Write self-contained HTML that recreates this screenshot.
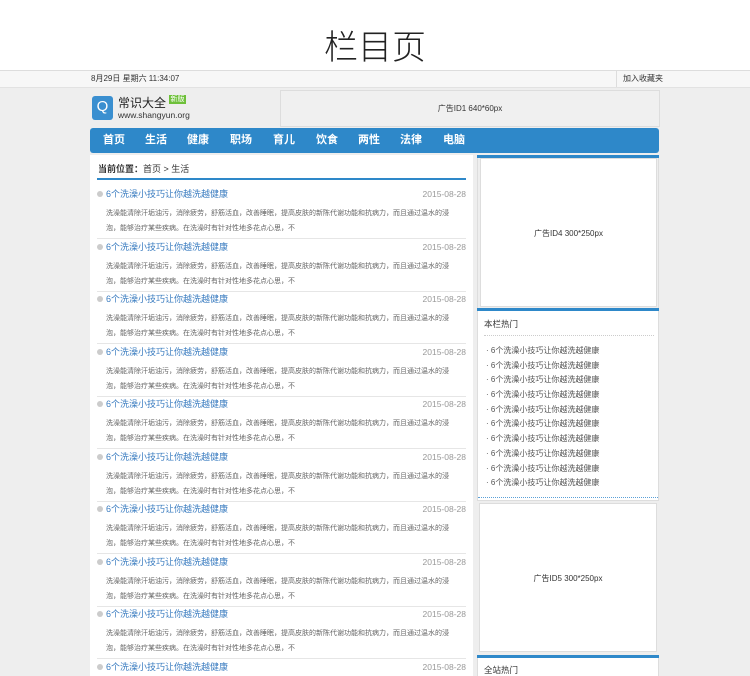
<!DOCTYPE html>
<html><head><meta charset="utf-8"><style>
*{margin:0;padding:0;box-sizing:border-box}
html{overflow:hidden;width:750px;height:676px}
body{width:750px;height:676px;overflow:hidden;background:#eeeeee;font-family:"Liberation Sans","Noto Sans CJK SC",sans-serif;position:relative;color:#333}
.a{position:absolute}
.title{left:0;top:0;width:750px;height:70px;background:#fff;text-align:center;font-size:34px;line-height:96px;color:#222;font-weight:300}
.top{left:0;top:70px;width:750px;height:18px;background:#f7f7f7;border-top:1px solid #ddd;border-bottom:1px solid #e2e2e2;font-size:8px;line-height:16px}
.nav{left:90px;top:128px;width:569px;height:25px;background:#2e88c9;border-radius:3px}
.nav span{position:absolute;top:0;line-height:25px;color:#fff;font-size:11px;font-weight:bold}
.left{left:90px;top:155px;width:383px;height:521px;background:#fff}
.it{position:absolute;left:7px;width:369px;font-size:8px}
.it .t{position:absolute;left:9px;top:-7px;color:#3a7cc0;font-size:9px;line-height:14px}
.it .d{position:absolute;right:0;top:-7px;color:#999;font-size:8.5px;line-height:14px}
.it .dot{position:absolute;left:0;top:-3px;width:6px;height:6px;border-radius:50%;background:#ccc}
.it .p{position:absolute;left:9px;top:12px;width:352px;color:#666;line-height:15px;font-size:7px}
.it .ln{position:absolute;left:0;top:44px;width:369px;height:1px;background:#e6e6e6}
.rp{background:#fff;border:1px solid #ddd}
.hot li{list-style:none;font-size:8px;color:#555;height:14.7px;line-height:14.7px}
</style></head><body>
<div class="a title">栏目页</div>
<div class="a top"><span class="a" style="left:91px;">8月29日 星期六 11:34:07</span><span class="a" style="left:616px;border-left:1px solid #ddd;padding-left:6px">加入收藏夹</span></div>
<div class="a" style="left:92px;top:96px;width:21px;height:24px;background:#3a8fd0;border-radius:3px;color:#fff;text-align:center;font-size:15px;line-height:22px">Q</div>
<div class="a" style="left:118px;top:96px;font-size:12px;line-height:14px;color:#222">常识大全</div>
<div class="a" style="left:169px;top:95px;width:17px;height:9px;background:#6ec03a;color:#fff;font-size:7px;line-height:9px;text-align:center">新版</div>
<div class="a" style="left:118px;top:110px;font-size:8.5px;line-height:10px;color:#333">www.shangyun.org</div>
<div class="a" style="left:280px;top:90px;width:380px;height:37px;background:#f0f0f0;border:1px solid #ddd;text-align:center;font-size:8px;line-height:35px">广告ID1 640*60px</div>
<div class="a nav"><span style="left:13px">首页</span><span style="left:55px">生活</span><span style="left:97px">健康</span><span style="left:140px">职场</span><span style="left:183px">育儿</span><span style="left:226px">饮食</span><span style="left:268px">两性</span><span style="left:310px">法律</span><span style="left:353px">电脑</span></div>
<div class="a left">
<div class="a" style="left:8px;top:7px;font-size:9px;line-height:14px"><b>当前位置：</b>首页 &gt; 生活</div>
<div class="a" style="left:7px;top:23px;width:369px;height:2px;background:#2e88c9"></div>
<div id="items"></div>
</div>
<div class="a" style="left:477px;top:155px;width:182px;height:3px;background:#2e88c9"></div>
<div class="a rp" style="left:480px;top:158px;width:177px;height:149px;text-align:center;font-size:8px;line-height:149px">广告ID4 300*250px</div>
<div class="a" style="left:477px;top:158px;width:182px;height:150px;border-left:1px solid #ddd;border-right:1px solid #ddd"></div>
<div class="a" style="left:477px;top:308px;width:182px;height:3px;background:#2e88c9"></div>
<div class="a rp" style="left:477px;top:311px;width:182px;height:190px;border-top:none">
<div class="a" style="left:6px;top:7px;font-size:8.5px;color:#333">本栏热门</div>
<div class="a" style="left:6px;top:24px;width:170px;border-top:1px dotted #ccc"></div>
<ul class="a hot" style="left:8px;top:33px">
<li>· 6个洗澡小技巧让你越洗越健康</li><li>· 6个洗澡小技巧让你越洗越健康</li><li>· 6个洗澡小技巧让你越洗越健康</li><li>· 6个洗澡小技巧让你越洗越健康</li><li>· 6个洗澡小技巧让你越洗越健康</li><li>· 6个洗澡小技巧让你越洗越健康</li><li>· 6个洗澡小技巧让你越洗越健康</li><li>· 6个洗澡小技巧让你越洗越健康</li><li>· 6个洗澡小技巧让你越洗越健康</li><li>· 6个洗澡小技巧让你越洗越健康</li></ul>
<div class="a" style="left:0;top:186px;width:180px;border-top:1px dotted #5aa0d8"></div>
</div>
<div class="a rp" style="left:479px;top:503px;width:178px;height:149px;text-align:center;font-size:8px;line-height:149px">广告ID5 300*250px</div>
<div class="a" style="left:477px;top:655px;width:182px;height:3px;background:#2e88c9"></div>
<div class="a" style="left:477px;top:658px;width:182px;height:18px;background:#fff;border-left:1px solid #ddd;border-right:1px solid #ddd"><span class="a" style="left:6px;top:6px;font-size:8.5px">全站热门</span></div>
<script>
var h='';for(var i=0;i<10;i++){var y=39+i*52.5;h+='<div class="a it" style="left:7px;top:'+y+'px"><div class="dot"></div><div class="t">6个洗澡小技巧让你越洗越健康</div><div class="d">2015-08-28</div><div class="p">洗澡能清除汗垢油污，消除疲劳，舒筋活血，改善睡眠，提高皮肤的新陈代谢功能和抗病力，而且通过温水的浸泡，能够治疗某些疾病。在洗澡时有针对性地多花点心思，不</div>'+(i<9?'<div class="ln"></div>':'')+'</div>'}
document.getElementById('items').innerHTML=h;
</script>
</body></html>
